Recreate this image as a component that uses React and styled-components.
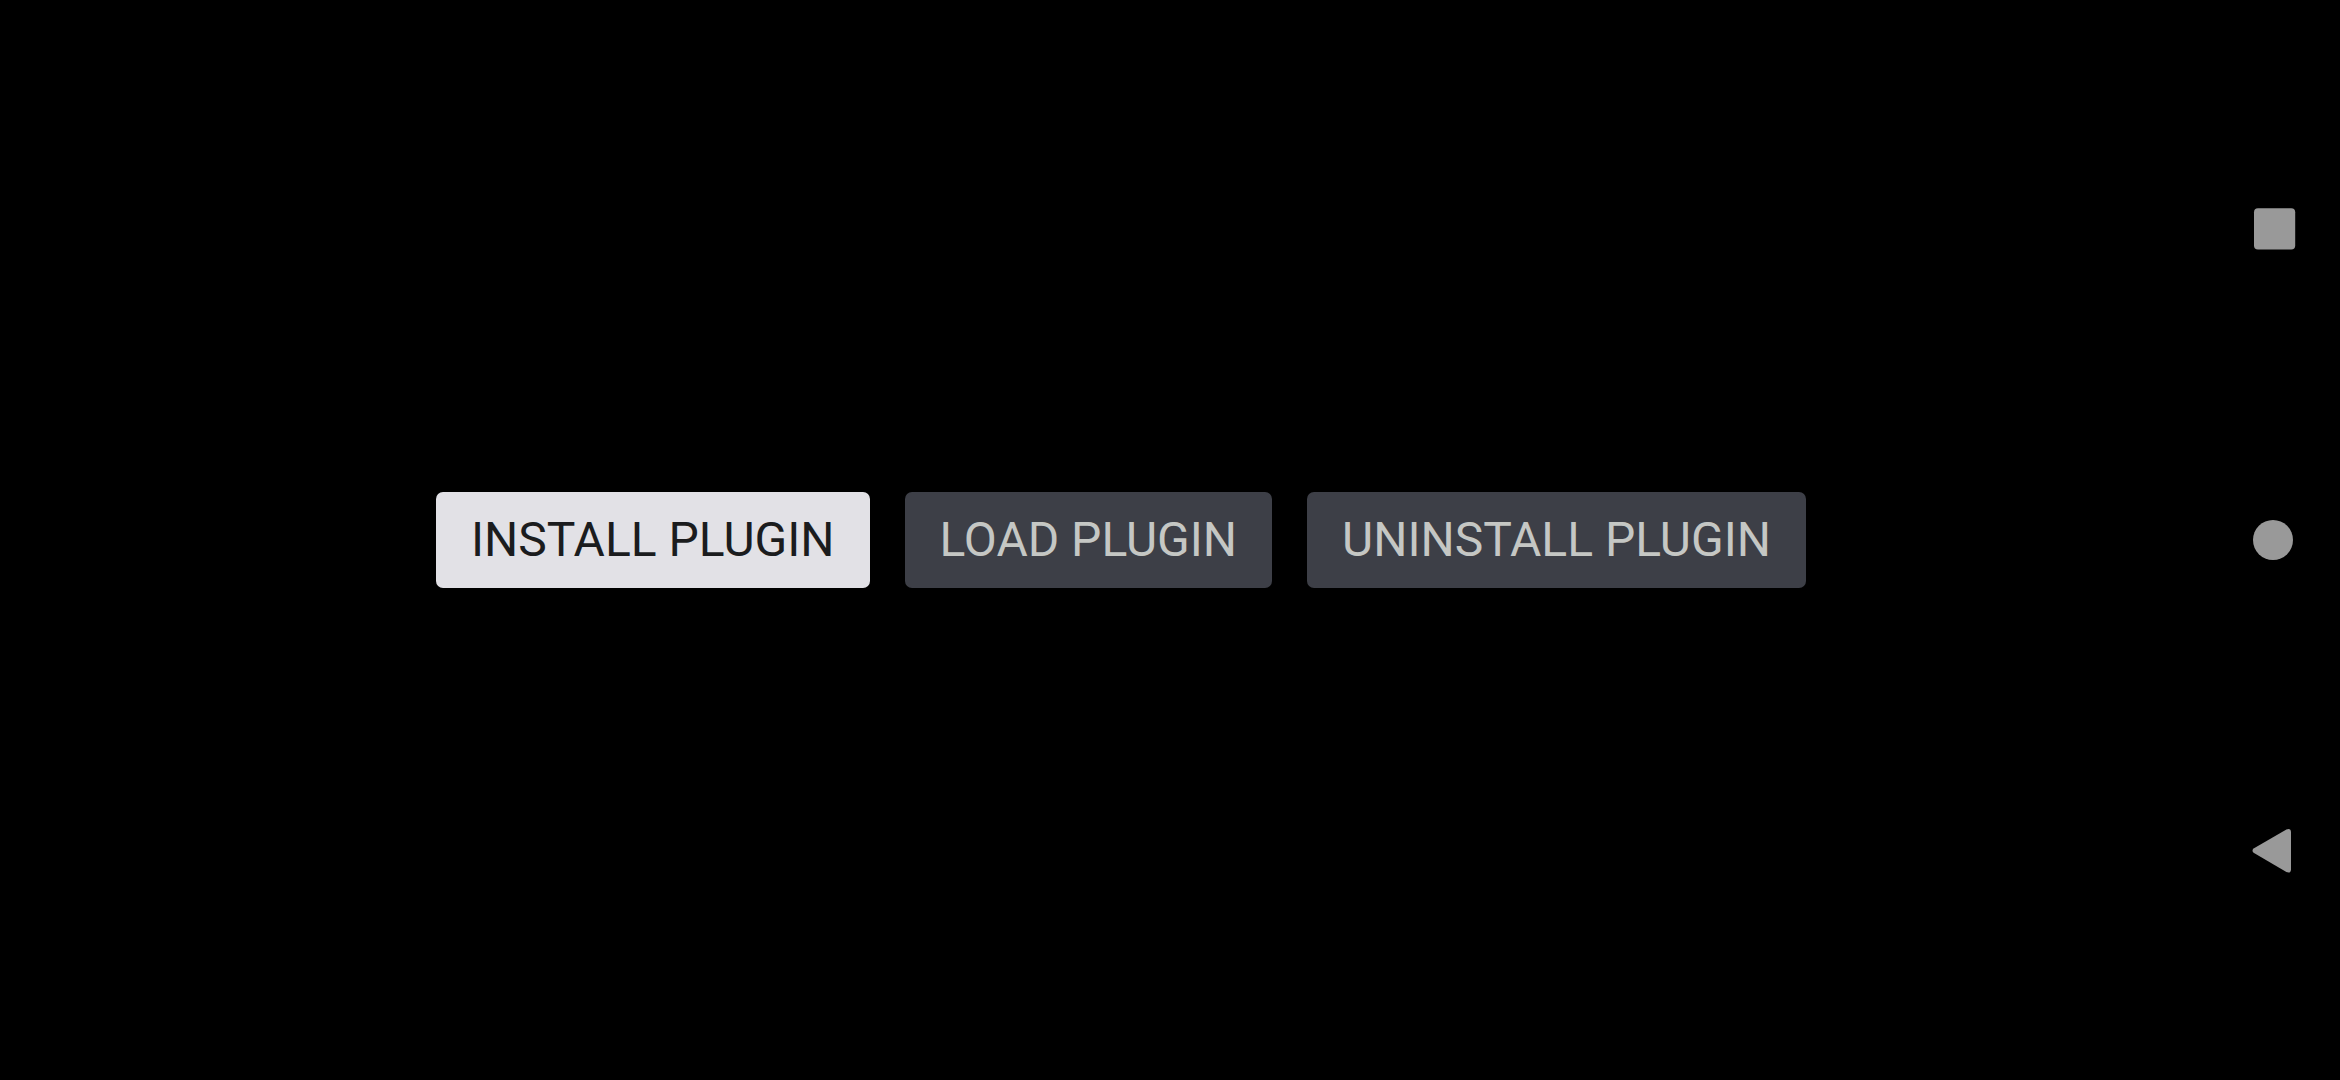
import React from "react";
import styled, { createGlobalStyle } from "styled-components";

const GlobalStyle = createGlobalStyle`
  *, *::before, *::after { box-sizing: border-box; }
  body { margin: 0; background: #000; font-family: Roboto, "Noto Sans", sans-serif; }
`;

const Screen = styled.div`
  display: flex;
  min-height: 100vh;
  background: #000;
`;

const Content = styled.main`
  flex: 1;
  display: flex;
  align-items: center;
  justify-content: center;
  gap: 35px;
  padding-left: 34px;
`;

const ActionButton = styled.button`
  height: 96px;
  padding: 0 35px;
  border: 0;
  border-radius: 7px;
  background: ${({ $primary }) => ($primary ? "#e2e1e6" : "#3d3f47")};
  color: ${({ $primary }) => ($primary ? "#1b1c1e" : "#c5c7c4")};
  font-family: inherit;
  font-size: 48px;
  font-weight: 400;
  line-height: 56px;
  white-space: nowrap;
  cursor: pointer;
`;

const SystemNav = styled.nav`
  width: 132px;
  display: flex;
  flex-direction: column;
  padding: 73px 0;
`;

const NavButton = styled.button`
  flex: 1;
  display: flex;
  align-items: center;
  justify-content: center;
  padding: 0;
  border: 0;
  background: transparent;
  color: #999;
  cursor: pointer;
`;

const NavIcon = styled.svg`
  width: 48px;
  height: 48px;
  fill: currentColor;
`;

const actions = [
  { label: "INSTALL PLUGIN", primary: true },
  { label: "LOAD PLUGIN", primary: false },
  { label: "UNINSTALL PLUGIN", primary: false },
];

export default function App() {
  return (
    <>
      <GlobalStyle />
      <Screen>
        <Content>
          {actions.map(({ label, primary }) => (
            <ActionButton key={label} type="button" $primary={primary}>
              {label}
            </ActionButton>
          ))}
        </Content>
        <SystemNav aria-label="System">
          <NavButton type="button" aria-label="Recent apps">
            <NavIcon viewBox="0 0 48 48" aria-hidden="true">
              <rect x="4" y="3.3" width="41.2" height="41.2" rx="4" />
            </NavIcon>
          </NavButton>
          <NavButton type="button" aria-label="Home">
            <NavIcon viewBox="0 0 48 48" aria-hidden="true">
              <circle cx="23" cy="24" r="20" />
            </NavIcon>
          </NavButton>
          <NavButton type="button" aria-label="Back">
            <NavIcon viewBox="0 0 48 48" aria-hidden="true">
              <path d="M36.4 2.5 L3.6 21.6 Q1.4 23.7 3.6 25.8 L36.4 45.1 Q40.8 46.8 41 42.5 V5.1 Q40.8 0.8 36.4 2.5 Z" />
            </NavIcon>
          </NavButton>
        </SystemNav>
      </Screen>
    </>
  );
}
